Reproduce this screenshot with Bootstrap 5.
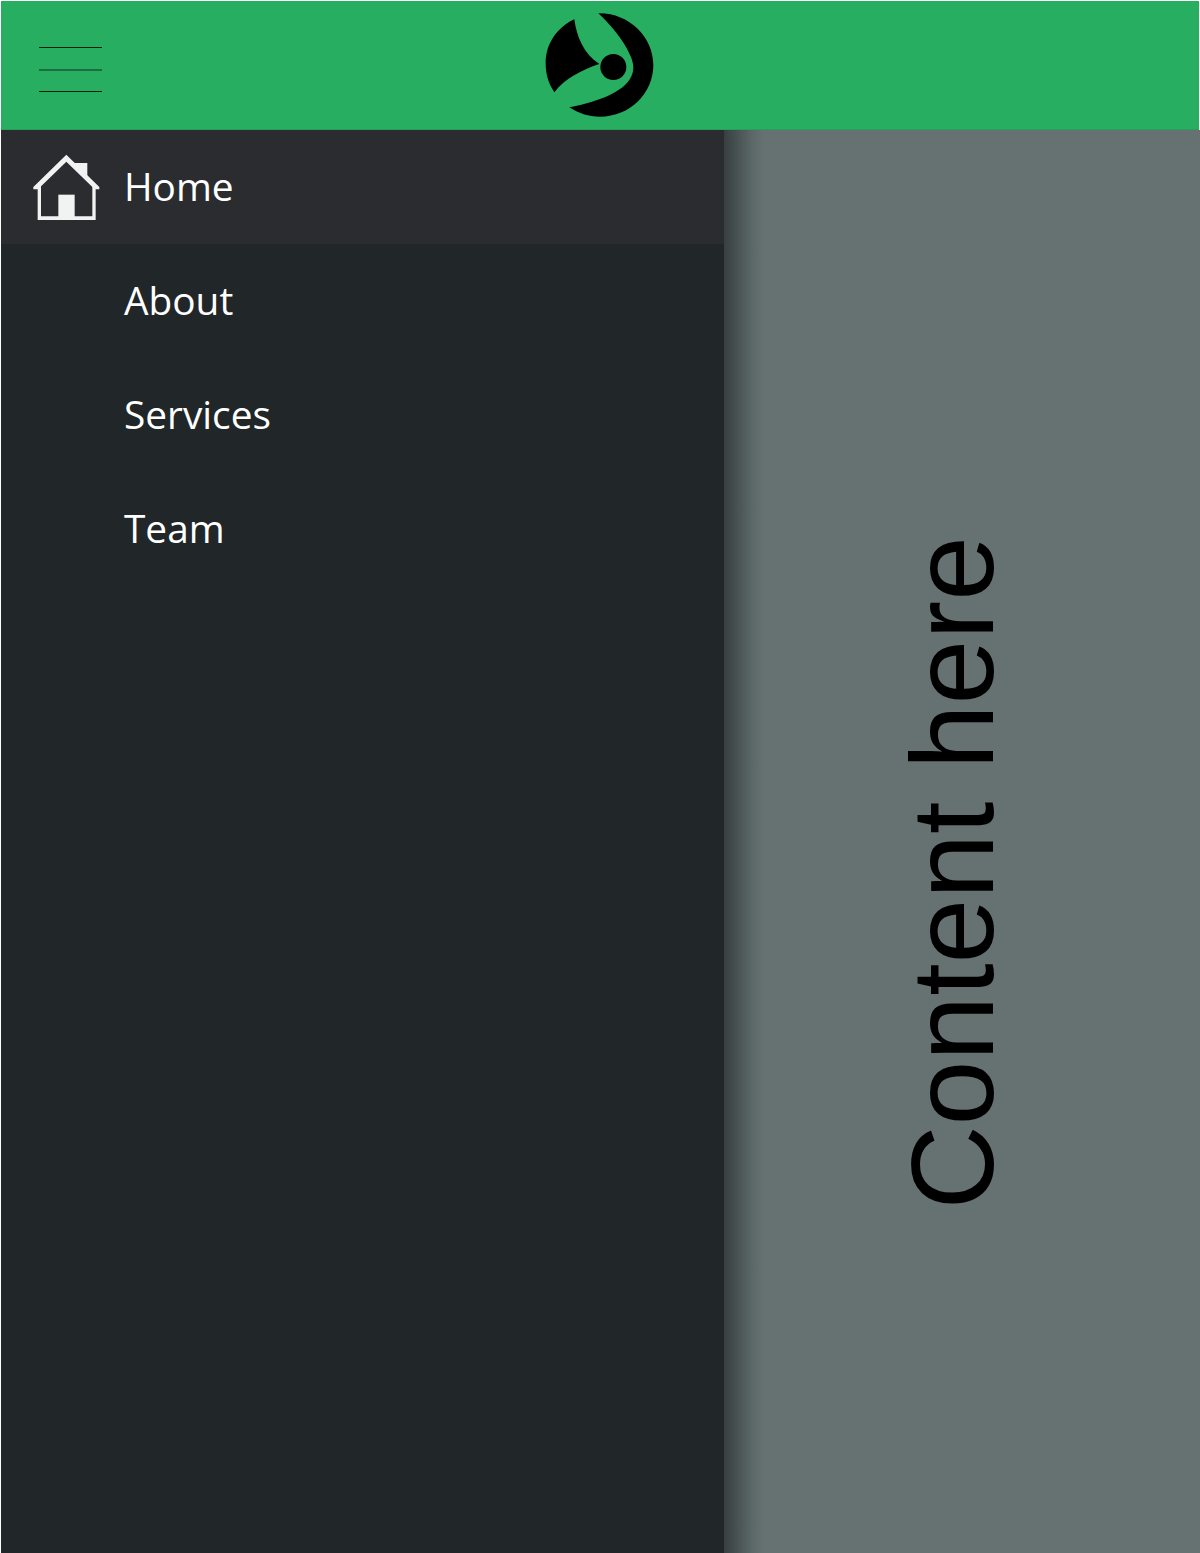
<!DOCTYPE html>
<html lang="en">
<head>
<meta charset="utf-8">
<title>Sidebar</title>
<link href="https://cdn.jsdelivr.net/npm/bootstrap@5.3.0/dist/css/bootstrap.min.css" rel="stylesheet">
<style>
html,body{height:100%;}
body{background:#fff;overflow:hidden;}
.app-shell{height:1553px;padding:1px 0 0 1px;}
.top-bar{height:129px;margin-right:1px;background:#27ae60;box-shadow:inset 0 -1px 0 #25a05a;position:relative;}
.burger{position:absolute;left:38px;top:46px;width:63px;height:46px;padding:0;border:0;background:none;}
.burger i{position:absolute;left:0;width:63px;height:1px;background:#02200e;}
.burger i:nth-child(1){top:0;}
.burger i:nth-child(2){top:22px;height:2px;background:#1a6f40;}
.burger i:nth-child(3){top:44px;}
.brand-logo{width:160px;height:129px;display:block;}
.body-area{height:1423px;}
.side-panel{width:723px;background:#212629;}
.side-link{height:114px;padding:0 0 2px 123px;color:#fff;font:400 38.8px "Open Sans",sans-serif;text-decoration:none;position:relative;}
.side-link:hover{color:#fff;}
.side-link.current{background:#2a2c2f;}
.home-icon{position:absolute;left:29px;top:22px;width:70px;height:70px;}
.content-pane{background:linear-gradient(90deg,#383f41 0,#495354 14px,#5c6767 28px,#667272 40px);padding:0 18px 0 0;}
.rotated-text{writing-mode:vertical-rl;transform:rotate(180deg);font:400 116.5px/1 "Liberation Sans",Arial,sans-serif;color:#000;margin-top:62px;}
</style>
</head>
<body>
<div class="app-shell d-flex flex-column">
  <header class="top-bar d-flex justify-content-center flex-shrink-0">
    <button class="burger" type="button" aria-label="Menu"><i></i><i></i><i></i></button>
    <svg class="brand-logo" viewBox="0 3 480 387" aria-label="Logo">
      <path fill="#000" d="M163 58 C170 110 190 160 238 192 C185 210 135 235 103 277 C85 250 77 222 77 190 C77 130 112 82 163 58Z"/>
      <path fill="#000" d="M235 40 C325 38 400 110 400 195 C400 280 330 350 240 350 C205 350 175 340 148 322 C215 310 300 282 328 240 C345 215 342 190 330 165 C310 120 275 78 235 40Z"/>
      <circle fill="#000" cx="280" cy="201" r="39"/>
    </svg>
  </header>
  <div class="body-area d-flex">
    <nav class="side-panel nav flex-column flex-nowrap flex-shrink-0">
      <a class="side-link current d-flex align-items-center" href="#">
        <svg class="home-icon" viewBox="90 455 210 210" aria-hidden="true">
          <path fill="#f2f2f2" d="M225 488H262V530L225 494Z"/>
          <path fill="#f2f2f2" d="M199 463 L298 560 L298 567 L284 567 L199 484 L114 567 L100 567 L100 560Z"/>
          <path fill="#f2f2f2" d="M113 555H123V648H277V555H287V659H113Z"/>
          <path fill="#f2f2f2" d="M175 583H224V650H175Z"/>
        </svg>
        Home</a>
      <a class="side-link d-flex align-items-center" href="#">About</a>
      <a class="side-link d-flex align-items-center" href="#">Services</a>
      <a class="side-link d-flex align-items-center" href="#">Team</a>
    </nav>
    <main class="content-pane flex-grow-1 d-flex align-items-center justify-content-center">
      <div class="rotated-text">Content here</div>
    </main>
  </div>
</div>
</body>
</html>
